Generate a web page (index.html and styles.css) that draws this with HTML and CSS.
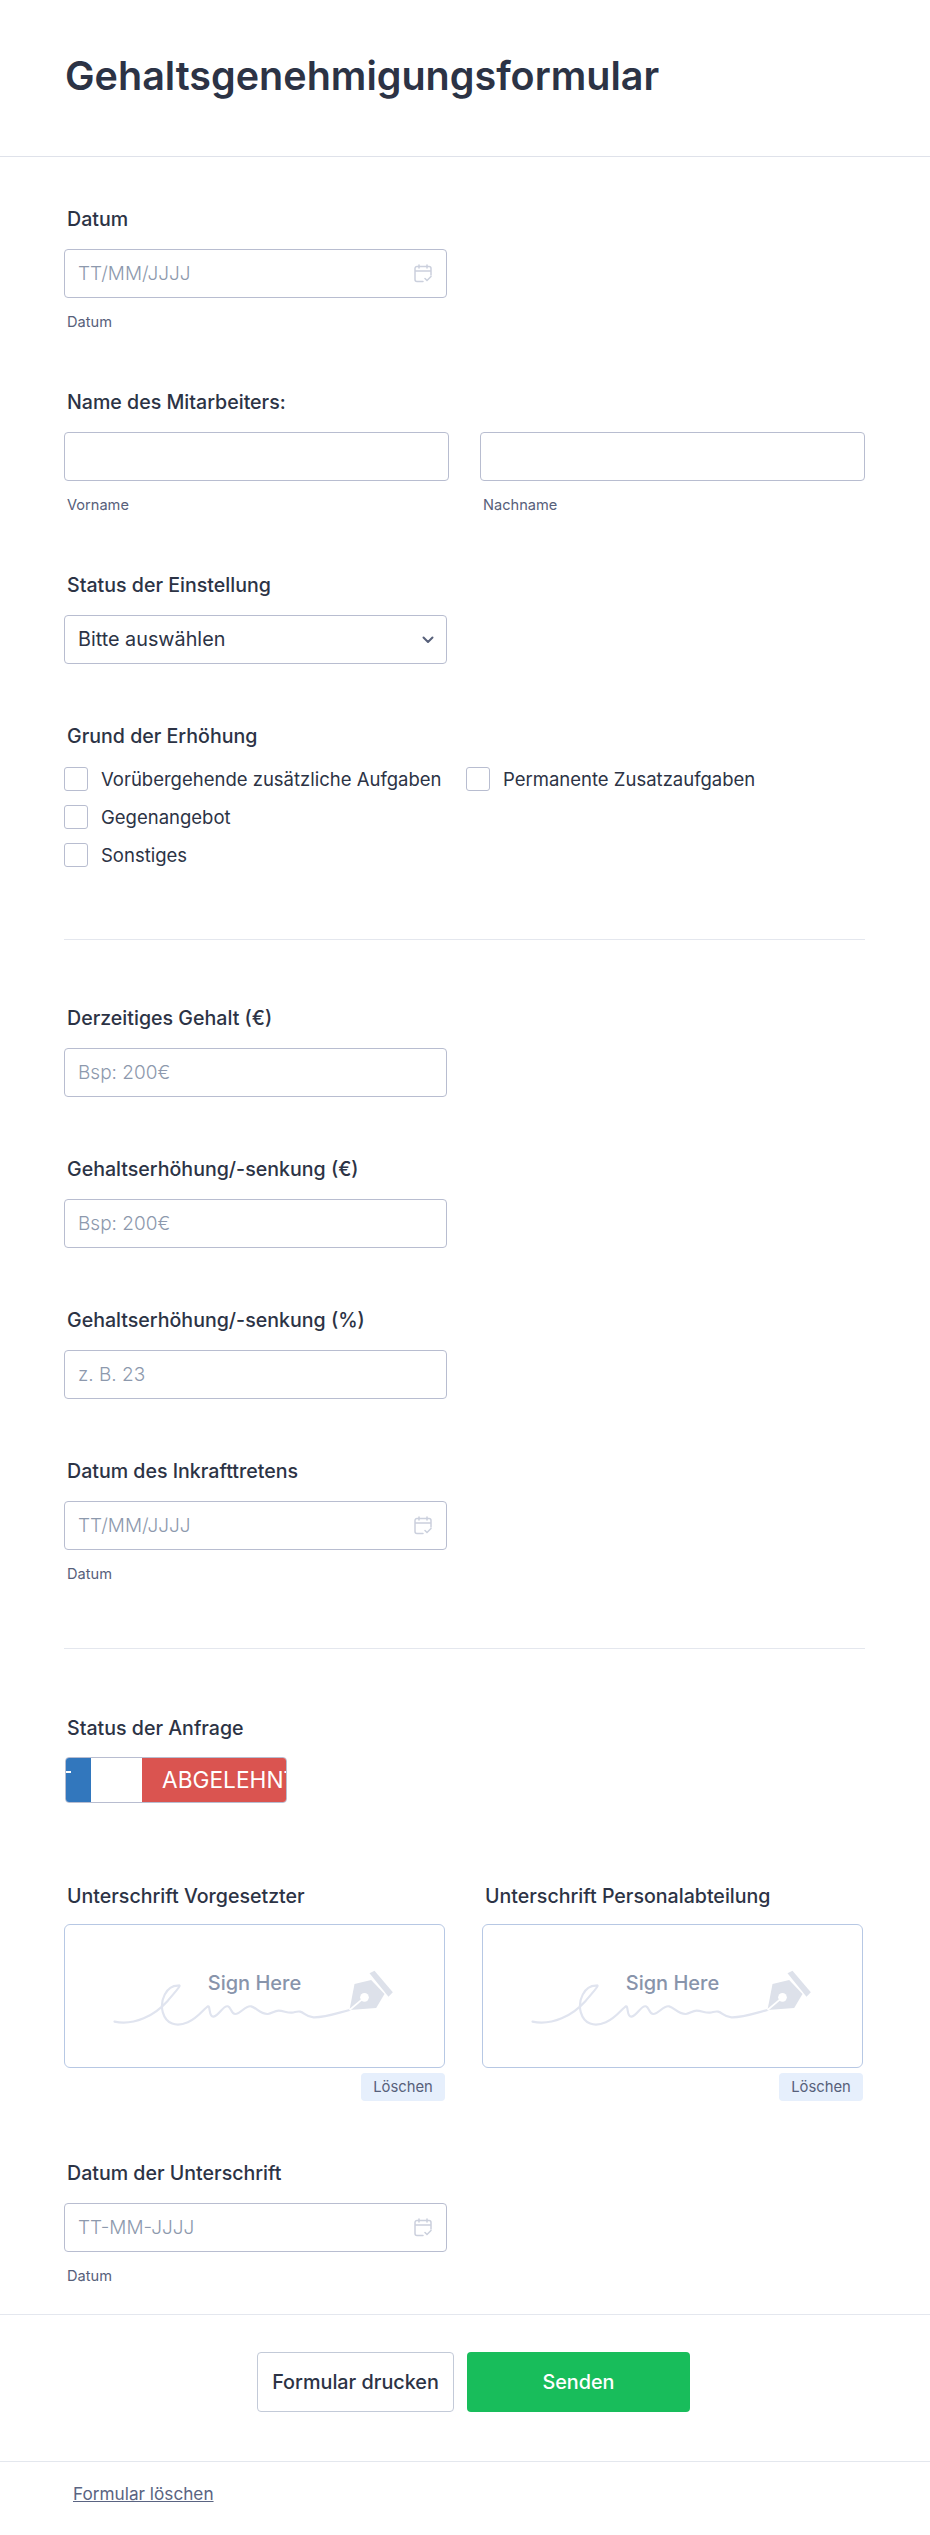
FILE: index.html
```html
<!DOCTYPE html>
<html lang="de">
<head>
<meta charset="utf-8">
<title>Gehaltsgenehmigungsformular</title>
<link rel="stylesheet" href="styles.css">
</head>
<body>
<svg class="defs" width="0" height="0" aria-hidden="true">
  <symbol id="cal" viewBox="0 0 18 19">
    <path d="M9 17.500H3a2 2 0 0 1-2-2V4.500a2 2 0 0 1 2-2h12a2 2 0 0 1 2 2V11M1 7h16M5 1v3M13 1v3M11 14.500l2 2 4-4" fill="none" stroke="#cbd0dd" stroke-width="1.500" stroke-linecap="round"/>
  </symbol>
  <symbol id="sig" viewBox="0 0 1142 429">
    <path d="M148 290C208 302 268 272 308 227C333 197 353 177 338 182C303 182 283 227 293 262C303 297 333 307 368 292C398 279 418 250 428 244C436 240 430 277 445 275C462 272 474 240 488 244C498 247 498 267 510 267C528 267 540 240 558 244C574 248 585 268 608 267C620 266 628 257 640 257C655 257 665 264 680 263C690 262 695 258 705 260C718 263 722 276 745 277C780 278 820 263 853 255" fill="none" stroke="#e0e4ef" stroke-width="6.500" stroke-linecap="round"/>
    <path d="M868 177L918 165L958 207L933 249L853 255Z" fill="#dde1ea"/>
    <path d="M913 145L928 137L983 202L970 215Z" fill="#dde1ea"/>
    <path d="M853 255L898 217" stroke="#fff" stroke-width="5"/>
    <circle cx="898" cy="217" r="13" fill="#fff"/>
  </symbol>
</svg>
<header class="head"><h1 class="title">Gehaltsgenehmigungsformular</h1></header>
<main class="form">
  <section class="field">
    <label class="label">Datum</label>
    <div class="control narrow"><input class="input" placeholder="TT/MM/JJJJ"><svg class="cal"><use href="#cal"/></svg></div>
    <span class="sub">Datum</span>
  </section>
  <section class="field">
    <label class="label">Name des Mitarbeiters:</label>
    <div class="name-row">
      <div class="name-col"><input class="input"><span class="sub">Vorname</span></div>
      <div class="name-col"><input class="input"><span class="sub">Nachname</span></div>
    </div>
  </section>
  <section class="field">
    <label class="label">Status der Einstellung</label>
    <div class="control narrow">
      <div class="input select">Bitte auswählen</div>
      <svg class="chev" viewBox="0 0 12 8"><path d="M1.500 1.500L6 6l4.500-4.500" fill="none" stroke="#57607a" stroke-width="2" stroke-linecap="round" stroke-linejoin="round"/></svg>
    </div>
  </section>
  <section class="field">
    <label class="label">Grund der Erhöhung</label>
    <div class="checks">
      <div class="check-row">
        <div class="check check-first"><span class="box"></span>Vorübergehende zusätzliche Aufgaben</div>
        <div class="check"><span class="box"></span>Permanente Zusatzaufgaben</div>
      </div>
      <div class="check"><span class="box"></span>Gegenangebot</div>
      <div class="check"><span class="box"></span>Sonstiges</div>
    </div>
  </section>
  <hr class="rule rule-one">
  <section class="field">
    <label class="label">Derzeitiges Gehalt (€)</label>
    <div class="control narrow"><input class="input" placeholder="Bsp: 200€"></div>
  </section>
  <section class="field">
    <label class="label">Gehaltserhöhung/-senkung (€)</label>
    <div class="control narrow"><input class="input" placeholder="Bsp: 200€"></div>
  </section>
  <section class="field">
    <label class="label">Gehaltserhöhung/-senkung (%)</label>
    <div class="control narrow"><input class="input" placeholder="z. B. 23"></div>
  </section>
  <section class="field">
    <label class="label">Datum des Inkrafttretens</label>
    <div class="control narrow"><input class="input" placeholder="TT/MM/JJJJ"><svg class="cal"><use href="#cal"/></svg></div>
    <span class="sub">Datum</span>
  </section>
  <hr class="rule rule-two">
  <section class="field">
    <label class="label">Status der Anfrage</label>
    <div class="toggle">
      <span class="tog-blue"><span class="tick"></span></span>
      <span class="tog-white"></span>
      <span class="tog-red">ABGELEHNT</span>
    </div>
  </section>
  <section class="sign-row">
    <div class="sign">
      <label class="label">Unterschrift Vorgesetzter</label>
      <div class="pad"><svg class="sig"><use href="#sig"/></svg><span class="sign-here">Sign Here</span></div>
      <button class="clear">Löschen</button>
    </div>
    <div class="sign">
      <label class="label">Unterschrift Personalabteilung</label>
      <div class="pad"><svg class="sig"><use href="#sig"/></svg><span class="sign-here">Sign Here</span></div>
      <button class="clear">Löschen</button>
    </div>
  </section>
  <section class="field">
    <label class="label">Datum der Unterschrift</label>
    <div class="control narrow"><input class="input" placeholder="TT-MM-JJJJ"><svg class="cal"><use href="#cal"/></svg></div>
    <span class="sub">Datum</span>
  </section>
</main>
<div class="actions">
  <button class="btn btn-print">Formular drucken</button>
  <button class="btn btn-send">Senden</button>
</div>
<footer class="foot"><a class="reset" href="#">Formular löschen</a></footer>
</body>
</html>
```

FILE: styles.css
```css
* { box-sizing: border-box; }
html, body { margin: 0; background: #fff; }
body {
  font-family: Inter, "Liberation Sans", sans-serif;
  color: #2c3345;
  height: 2535px;
  overflow: hidden;
}
.defs { position: absolute; }
.head { height: 157px; border-bottom: 1px solid #dfe2ea; padding: 52px 65px 0; }
.title { margin: 0; font-size: 39.500px; line-height: 48px; font-weight: 600; }
.form { padding: 51px 65px 0 64px; display: flex; flex-direction: column; gap: 61px; height: 2158px; border-bottom: 1px solid #e4e7ee; }
.field, .sign { display: flex; flex-direction: column; align-items: flex-start; }
.label { display: block; font-size: 19.600px; line-height: 22px; font-weight: 450; margin: 0 0 19px 3px; white-space: nowrap; }
.control { position: relative; }
.narrow { width: 383px; }
.input {
  display: block;
  width: 100%;
  height: 49px;
  border: 1px solid #b8bdd0;
  border-radius: 4px;
  padding: 0 13px;
  font: 400 19px Inter, sans-serif;
  color: #2c3345;
  background: #fff;
}
.input::placeholder { color: #8d99ad; opacity: 1; font-weight: 300; }
.select { line-height: 47px; font-size: 19.800px; }
.cal { position: absolute; right: 15px; top: 15px; width: 18px; height: 19px; }
.chev { position: absolute; right: 13px; top: 21px; width: 12px; height: 8px; }
.sub { display: block; font-size: 14.600px; line-height: 16px; color: #57607a; margin: 16px 0 0 3px; }
.name-row { display: grid; grid-template-columns: 385px 385px; column-gap: 31px; width: 801px; }
.checks { display: flex; flex-direction: column; gap: 14px; margin-top: 1px; }
.check-row { display: flex; }
.check { display: flex; align-items: center; font-size: 18.500px; line-height: 24px; white-space: nowrap; }
.check-first { width: 402px; }
.box { width: 24px; height: 24px; border: 1px solid #b8bdd0; border-radius: 3px; margin-right: 13px; }
.rule { height: 1px; border: 0; background: #e4e7ee; width: 801px; }
.rule-one { margin: 11px 0 6px; }
.rule-two { margin: 5px 0 7px; }
.toggle {
  display: flex;
  width: 222px;
  height: 46px;
  border: 1px solid #b8bdd0;
  border-radius: 4px;
  overflow: hidden;
  margin: -1px 0 0 1px;
}
.tog-blue { position: relative; width: 25px; background: #3277bd; }
.tick { position: absolute; left: 0; top: 13px; width: 5px; height: 1.500px; background: #fff; }
.tog-white { width: 51px; background: #fff; }
.tog-red {
  flex: 1;
  background: #da5450;
  color: #fff;
  font-size: 22.700px;
  line-height: 44px;
  padding-left: 20px;
  white-space: nowrap;
  overflow: hidden;
}
.sign-row { display: grid; grid-template-columns: 381px 381px; column-gap: 37px; margin-top: 21px; }
.sign .label { margin-bottom: 17px; }
.pad { position: relative; width: 381px; height: 144px; border: 1px solid #b7c8e4; border-radius: 6px; }
.sig { position: absolute; left: 0; top: 0; width: 381px; height: 143px; }
.sign-here { position: absolute; left: 0; right: 0; top: 46px; text-align: center; font-size: 20px; line-height: 24px; color: #8894ab; font-weight: 500; }
.clear {
  align-self: flex-end;
  width: 84px;
  height: 28px;
  margin-top: 5px;
  border: 0;
  border-radius: 4px;
  background: #e6effc;
  color: #57607a;
  font: 400 14.800px Inter, sans-serif;
}
.actions { height: 147px; display: flex; justify-content: center; align-items: flex-start; gap: 13px; padding: 37px 0 0 17px; border-bottom: 1px solid #e4e7ee; }
.btn { height: 60px; border-radius: 4px; font: 500 19.800px Inter, sans-serif; }
.btn-print { width: 197px; background: #fff; border: 1px solid #c3cad8; color: #2c3345; }
.btn-send { width: 223px; background: #18bd5b; border: 0; color: #fff; }
.foot { padding: 22px 73px; }
.reset { font-size: 17.200px; line-height: 20px; color: #5a6482; text-decoration: underline; }
```
